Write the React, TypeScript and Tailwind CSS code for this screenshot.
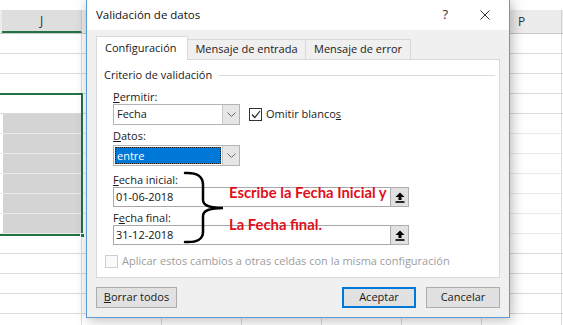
import React from "react";

const COLS = ["J", "K", "L", "M", "N", "O", "P"];

function Chevron() {
  return (
    <svg width="9" height="5" viewBox="0 0 9 5">
      <path d="M0.5 0.5 L4.5 4.5 L8.5 0.5" fill="none" stroke="#6b6b6b" strokeWidth="1" />
    </svg>
  );
}

function UploadIcon() {
  return (
    <svg width="10" height="11" viewBox="0 0 10 11">
      <path d="M5 0.5 L9.5 5 L6.5 5 L6.5 8 L3.5 8 L3.5 5 L0.5 5 Z" fill="#000" />
      <rect x="0.5" y="9.2" width="9" height="1.6" fill="#000" />
    </svg>
  );
}

function DateInput({ value }: { value: string }) {
  return (
    <div className="flex h-[20px] w-[296px] border border-[#a9a9a9] bg-white">
      <div className="flex-1 flex items-center pl-[2px] text-[11px] text-[#111]">{value}</div>
      <div className="w-[19px] -my-px -mr-px flex items-center justify-center bg-[#e1e1e1] border border-[#adadad]">
        <UploadIcon />
      </div>
    </div>
  );
}

export default function App() {
  const rows = Array.from({ length: 15 }, (_, i) => i);
  return (
    <div className="relative w-[563px] h-[325px] overflow-hidden bg-white font-['Open_Sans',sans-serif] text-[#1a1a1a]">
      {/* Spreadsheet */}
      <div className="flex flex-col">
        <div className="h-[10px] bg-white" />
        <div className="flex h-[24px] bg-[#ececec] border-b border-[#c8c8c8]">
          <div className="w-[2px] shrink-0" />
          {COLS.map((c) => (
            <div
              key={c}
              className={
                c === "J"
                  ? "w-[80px] shrink-0 flex items-center justify-center text-[12px] text-[#333] bg-[#dedede] border-r border-[#c8c8c8] border-b-2 border-b-[#217346]"
                  : "w-[80px] shrink-0 flex items-center justify-center text-[12px] text-[#333] border-r border-[#d0d0d0]"
              }
            >
              {c === "J" || c === "P" ? c : ""}
            </div>
          ))}
        </div>
        {rows.map((i) => {
          const gray = i >= 4 && i <= 9;
          return (
            <div key={i} className={gray ? "flex h-[20px] border-b border-[#ebebeb]" : "flex h-[20px] border-b border-[#dadada]"}>
              <div className="w-[3px] shrink-0" />
              <div className={gray ? "w-[79px] shrink-0 bg-[#d4d4d4] border-r border-[#d4d4d4]" : "w-[79px] shrink-0 border-r border-[#dadada]"} />
              {COLS.slice(1).map((c) => (
                <div key={c} className="w-[80px] shrink-0 border-r border-[#dadada]" />
              ))}
            </div>
          );
        })}
      </div>

      {/* Selection border */}
      <div className="absolute left-[-4px] top-[93px] w-[87px] h-[143px] border-2 border-[#217346]" />
      <div className="absolute left-[80px] top-[233px] w-[5px] h-[5px] bg-[#217346] border border-white" />

      {/* Dialog */}
      <div className="absolute left-[86px] top-[-1px] w-[424px] h-[319px] border border-[#5a9bd8] bg-[#f0f0f0] flex flex-col shadow-[2px_2px_12px_rgba(0,0,0,0.28)]">
        <div className="h-[30px] bg-white flex items-center pl-[9px] text-[11.5px] text-[#111]">
          <span>Validación de datos</span>
          <span className="ml-auto mr-[32px] text-[13px] text-[#333]">?</span>
          <svg className="mr-[19px]" width="10" height="10" viewBox="0 0 10 10">
            <path d="M0.5 0.5 L9.5 9.5 M9.5 0.5 L0.5 9.5" stroke="#333" strokeWidth="1" />
          </svg>
        </div>
        <div className="flex-1 flex flex-col px-[9px] pt-[6px]">
          {/* Tabs */}
          <div className="flex items-end h-[24px] relative z-10 text-[11px]">
            <div className="h-[24px] w-[92px] bg-white border border-b-0 border-[#d9d9d9] flex items-center pl-[8px]">
              Configuración
            </div>
            <div className="h-[20px] w-[118px] border border-l-0 border-b-0 border-[#d9d9d9] flex items-center justify-center mb-px">
              Mensaje de entrada
            </div>
            <div className="h-[20px] w-[105px] border border-l-0 border-b-0 border-[#d9d9d9] flex items-center justify-center mb-px">
              Mensaje de error
            </div>
          </div>
          {/* Panel */}
          <div className="-mt-px h-[219px] bg-white border border-[#d9d9d9] flex flex-col pt-[7px] text-[11px]">
            <div className="flex items-center h-[16px] pl-[7px] pr-[4px]">
              <span>Criterio de validación</span>
              <div className="flex-1 h-px bg-[#dcdcdc] ml-[6px]" />
            </div>
            <div className="flex flex-col pl-[16px] mt-[6px]">
              <div className="h-[15px] leading-[15px]">
                <span className="underline">P</span>ermitir:
              </div>
              <div className="flex items-start">
                <div className="w-[127px] h-[21px] border border-[#b4b4b4] bg-white flex">
                  <div className="flex-1 flex items-center pl-[3px]">Fecha</div>
                  <div className="w-[17px] bg-[#e6e6e6] border-l border-[#c8c8c8] flex items-center justify-center">
                    <Chevron />
                  </div>
                </div>
                <div className="ml-[9px] mt-[2px] flex items-center">
                  <div className="w-[13px] h-[13px] border border-[#333] bg-white flex items-center justify-center">
                    <svg width="10" height="9" viewBox="0 0 10 9">
                      <path d="M1 4.5 L3.8 7.5 L9 1" fill="none" stroke="#222" strokeWidth="1.2" />
                    </svg>
                  </div>
                  <span className="ml-[4px]">
                    Omitir blanco<span className="underline">s</span>
                  </span>
                </div>
              </div>
              <div className="h-[15px] leading-[15px] mt-[3px]">
                <span className="underline">D</span>atos:
              </div>
              <div className="w-[127px] h-[21px] mt-[2px] border border-[#b4b4b4] bg-white flex">
                <div className="flex-1 p-[1px] flex">
                  <div className="flex-1 bg-[#0078d7] border border-dotted border-[#222] text-white flex items-center pl-[1px] leading-none">
                    entre
                  </div>
                </div>
                <div className="w-[17px] bg-[#e6e6e6] border-l border-[#c8c8c8] flex items-center justify-center">
                  <Chevron />
                </div>
              </div>
              <div className="h-[15px] leading-[15px] mt-[6px]">
                <span className="underline">F</span>echa inicial:
              </div>
              <DateInput value="01-06-2018" />
              <div className="h-[15px] leading-[15px] mt-[3px]">
                F<span className="underline">e</span>cha final:
              </div>
              <DateInput value="31-12-2018" />
            </div>
            <div className="flex items-center pl-[8px] mt-[8px] text-[#9d9d9d]">
              <div className="w-[13px] h-[13px] border border-[#cfcfcf] bg-[#fafafa]" />
              <span className="ml-[4px]">Aplicar estos cambios a otras celdas con la misma configuración</span>
            </div>
          </div>
          {/* Buttons */}
          <div className="flex mt-[9px] text-[11px]">
            <div className="w-[81px] h-[21px] bg-[#e1e1e1] border border-[#adadad] flex items-center justify-center">
              <span>
                <span className="underline">B</span>orrar todos
              </span>
            </div>
            <div className="ml-auto w-[74px] h-[21px] bg-[#e1e1e1] border-2 border-[#0078d7] flex items-center justify-center">
              Aceptar
            </div>
            <div className="ml-[10px] w-[74px] h-[21px] bg-[#e1e1e1] border border-[#adadad] flex items-center justify-center">
              Cancelar
            </div>
          </div>
        </div>
      </div>

      {/* Annotation brace */}
      <svg className="absolute left-[180px] top-[168px]" width="48" height="80" viewBox="0 0 48 80">
        <path
          d="M5 5 Q23 4 23 17 L23 32 Q23 40 43 40 Q23 40 23 48 L23 64 Q23 75 5 74"
          fill="none"
          stroke="#000"
          strokeWidth="2.5"
          strokeLinecap="round"
        />
      </svg>
      <div className="absolute left-[229px] top-[183px] text-[14.8px] leading-[18px] font-bold text-[#e0101a] font-['Lato',sans-serif]">
        Escribe la Fecha Inicial y
      </div>
      <div className="absolute left-[229px] top-[215px] text-[14.8px] leading-[18px] font-bold text-[#e0101a] font-['Lato',sans-serif]">
        La Fecha final.
      </div>
    </div>
  );
}
